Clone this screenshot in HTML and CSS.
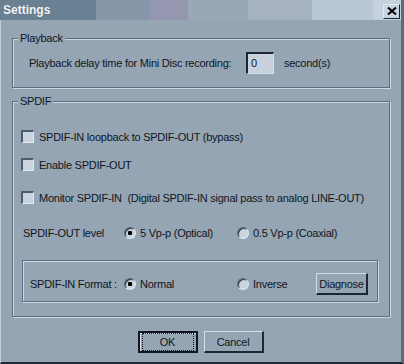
FILE: index.html
```html
<!DOCTYPE html>
<html lang="en">
<head>
  <meta charset="UTF-8">
  <title>Settings</title>
  <link rel="stylesheet" href="styles.css">
</head>
<body>

  <div class="window">
    <div class="titlebar">
      <span class="title">Settings</span>
      <span class="close">
        <svg width="10" height="8" viewBox="0 0 10 8"><path d="M1 0.5 L9 7.5 M9 0.5 L1 7.5" stroke="#000" stroke-width="2"/></svg>
      </span>
    </div>

    <div class="content">
      <fieldset class="group playback">
        <legend>Playback</legend>
        <div class="delay-row">
          <span class="delay-label">Playback delay time for Mini Disc recording:</span>
          <span class="field">0</span>
          <span>second(s)</span>
        </div>
      </fieldset>

      <fieldset class="group spdif">
        <legend>SPDIF</legend>
        <div class="check row-1"><span class="box"></span>SPDIF-IN loopback to SPDIF-OUT (bypass)</div>
        <div class="check row-2"><span class="box"></span>Enable SPDIF-OUT</div>
        <div class="check row-3"><span class="box"></span>Monitor SPDIF-IN&nbsp; (Digital SPDIF-IN signal pass to analog LINE-OUT)</div>

        <div class="level-row">
          <span class="level-label">SPDIF-OUT level</span>
          <span class="option"><span class="radio on"></span>5 Vp-p (Optical)</span>
          <span class="option"><span class="radio"></span>0.5 Vp-p (Coaxial)</span>
        </div>

        <div class="format-box">
          <span class="format-label">SPDIF-IN Format :</span>
          <span class="option"><span class="radio on"></span>Normal</span>
          <span class="option short"><span class="radio"></span>Inverse</span>
          <button class="btn diagnose">Diagnose</button>
        </div>
      </fieldset>

      <div class="buttons">
        <button class="btn default"><span class="focus">OK</span></button>
        <button class="btn">Cancel</button>
      </div>
    </div>
  </div>

</body>
</html>
```

FILE: styles.css
```css
* {
  margin: 0;
  padding: 0;
  box-sizing: border-box;
  font-family: "Liberation Sans", Arial, sans-serif;
}

body {
  background: #96a5b3;
  width: 404px;
  height: 364px;
  overflow: hidden;
}

.window {
  width: 404px;
  height: 364px;
  background: #96a5b3;
  border-left: 1px solid #c2ced9;
  border-right: 3px solid #5b6b7b;
  border-bottom: 2px solid #1e2a3a;
  color: #0e161e;
  font-size: 11px;
  letter-spacing: -0.25px;
}

.titlebar {
  height: 20px;
  display: flex;
  align-items: center;
  justify-content: space-between;
  padding: 0 1px 0 3px;
  margin-left: -1px;
  letter-spacing: 0;
  background: linear-gradient(to right,
    #6a8193 0 96px,
    #8697a9 96px 150px,
    #9597b1 150px 188px,
    #98a8b7 188px 248px,
    #a6b1c1 248px 312px,
    #b9c8d6 312px 373px,
    #c5d2de 373px);
}

.title {
  color: #f4f6f8;
  font-weight: bold;
  font-size: 12px;
  text-shadow: 0 0 1px #4c5e6e;
}

.close {
  width: 17px;
  height: 15px;
  margin-top: 2px;
  display: flex;
  align-items: center;
  justify-content: center;
  background: #c7d3df;
  border-top: 1px solid #e2e9f0;
  border-left: 1px solid #e2e9f0;
  border-right: 1px solid #1a2636;
  border-bottom: 1px solid #1a2636;
}

.content {
  padding: 11px 0 0 11px;
}

.group {
  width: 378px;
  border: 1px solid #5e6e80;
  box-shadow: 1px 1px 0 #cbd7e3, inset 1px 1px 0 #cbd7e3;
  padding: 0 5px;
  min-width: 0;
}

.group legend {
  padding: 0 2px;
  line-height: 14px;
  background: #96a5b3;
}

.playback {
  padding-bottom: 13px;
}

.delay-row {
  display: flex;
  align-items: center;
  margin: 7px 0 0 11px;
  height: 22px;
}

.delay-label {
  width: 217px;
}

.field {
  width: 28px;
  height: 22px;
  margin-right: 10px;
  padding: 3px 0 0 3px;
  background: #c6d1dd;
  border-top: 2px solid #1d2733;
  border-left: 2px solid #1d2733;
  border-right: 1px solid #d8e1ea;
  border-bottom: 1px solid #d8e1ea;
}

.spdif {
  margin-top: 6px;
  padding-bottom: 14px;
}

.check {
  display: flex;
  align-items: center;
  height: 13px;
  margin-left: 3px;
}

.row-1 { margin-top: 22px; }
.row-2 { margin-top: 15px; }
.row-3 { margin-top: 20px; }

.box {
  width: 13px;
  height: 13px;
  margin-right: 5px;
  background: #c9d4df;
  border-top: 2px solid #4d5c6b;
  border-left: 2px solid #4d5c6b;
  border-right: 1px solid #dfe7ef;
  border-bottom: 1px solid #dfe7ef;
}

.level-row {
  display: flex;
  align-items: center;
  height: 12px;
  margin: 23px 0 0 5px;
}

.level-label {
  width: 101px;
}

.option {
  display: flex;
  align-items: center;
  width: 113px;
}

.option.short {
  width: 79px;
}

.radio {
  width: 12px;
  height: 12px;
  margin-right: 4px;
  border-radius: 50%;
  background: #c9d4df;
  border: 1px solid;
  border-color: #56677a #e0e8ef #e0e8ef #56677a;
  box-shadow: inset 1px 1px 0 #2a3644;
}

.radio.on {
  background: radial-gradient(circle, #000 0 2px, #c9d4df 2.5px);
}

.format-box {
  display: flex;
  align-items: center;
  width: 356px;
  height: 42px;
  margin: 21px 0 0 4px;
  padding: 12px 0 6px 7px;
  border: 1px solid #5e6e80;
  box-shadow: 1px 1px 0 #cbd7e3, inset 1px 1px 0 #cbd7e3;
}

.format-label {
  width: 94px;
}

.btn {
  height: 22px;
  font-size: 11px;
  letter-spacing: -0.25px;
  color: #0e161e;
  background: #96a5b3;
  border-top: 1px solid #d6dfe8;
  border-left: 1px solid #d6dfe8;
  border-right: 2px solid #1c2836;
  border-bottom: 2px solid #1c2836;
}

.diagnose {
  width: 52px;
}

.buttons {
  display: flex;
  justify-content: center;
  gap: 6px;
  margin: 14px 0 0 -12px;
}

.buttons .btn {
  width: 60px;
}

.btn.default {
  border: 2px solid #0f1822;
  box-shadow: inset 1px 1px 0 #d6dfe8;
}

.focus {
  display: block;
  margin: 0 2px;
  padding: 2px 0;
  border: 1px dotted #0f1822;
}
```
